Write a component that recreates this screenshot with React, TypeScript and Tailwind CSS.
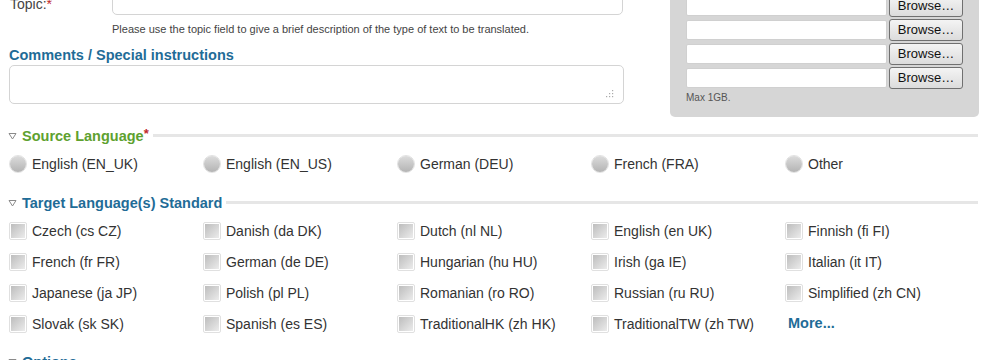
import React from "react"

const sourceLangs = ["English (EN_UK)", "English (EN_US)", "German (DEU)", "French (FRA)", "Other"]

const targetLangs = [
  "Czech (cs CZ)",
  "Danish (da DK)",
  "Dutch (nl NL)",
  "English (en UK)",
  "Finnish (fi FI)",
  "French (fr FR)",
  "German (de DE)",
  "Hungarian (hu HU)",
  "Irish (ga IE)",
  "Italian (it IT)",
  "Japanese (ja JP)",
  "Polish (pl PL)",
  "Romanian (ro RO)",
  "Russian (ru RU)",
  "Simplified (zh CN)",
  "Slovak (sk SK)",
  "Spanish (es ES)",
  "TraditionalHK (zh HK)",
  "TraditionalTW (zh TW)",
]

function Triangle() {
  return (
    <svg width="9" height="8" viewBox="0 0 9 8" className="mr-[5px] shrink-0">
      <path d="M1 1.5 L8 1.5 L4.5 7 Z" fill="none" stroke="#8a8a8a" strokeWidth="1" />
    </svg>
  )
}

function SectionHeading({ title, color, required }: { title: string; color: string; required?: boolean }) {
  return (
    <div className="flex items-center h-[18px] pl-[8px] pr-[9px]">
      <Triangle />
      <span className={`text-[14.5px] font-bold leading-[18px] ${color}`}>{title}</span>
      {required && <span className="text-[#c0282a] text-[13px] font-bold leading-[18px] -mt-[4px]">*</span>}
      <div className="flex-1 h-[3px] bg-[#e6e6e6] ml-[4px] -mt-[2px]" />
    </div>
  )
}

function Radio() {
  return (
    <span className="w-[18px] h-[18px] rounded-full border border-[#e2e2e2] bg-white flex items-center justify-center shrink-0">
      <span className="w-[16px] h-[16px] rounded-full bg-gradient-to-b from-[#dcdcdc] to-[#b4b4b4]" />
    </span>
  )
}

function Checkbox() {
  return (
    <span className="w-[18px] h-[18px] rounded-[2px] border border-[#e0e0e0] bg-white flex items-center justify-center shrink-0">
      <span className="w-[14px] h-[14px] bg-gradient-to-br from-[#bdbdbd] to-[#ececec]" />
    </span>
  )
}

function FileRow() {
  return (
    <div className="flex items-center h-[20px]">
      <div className="w-[201px] h-[20px] bg-white border border-[#d0d0d0] rounded-[2px]" />
      <button className="ml-[2px] w-[74px] h-[22px] rounded-[3px] border border-[#707070] bg-gradient-to-b from-[#f4f4f4] to-[#dcdcdc] text-[13px] text-[#111] leading-[20px]">
        Browse…
      </button>
    </div>
  )
}

export default function App() {
  return (
    <div className="w-[987px] h-[360px] overflow-hidden bg-white text-[#333] font-['Liberation_Sans',Arial,sans-serif]">
      <div className="-mt-[24px]">
        <div className="flex">
          <div className="w-[624px] pl-[9px]">
            <div className="flex">
              <div className="w-[103px] pt-[18px] pl-[1px] text-[14px] leading-[20px] text-[#444]">
                Topic:<span className="text-[#c0282a]">*</span>
              </div>
              <div className="w-[511px] h-[39px] border border-[#d4d4d4] rounded-[5px] bg-white" />
            </div>
            <p className="ml-[103px] mt-[7px] text-[11px] leading-[14px] text-[#444]">
              Please use the topic field to give a brief description of the type of text to be translated.
            </p>
            <h3 className="mt-[10px] text-[14.5px] font-bold leading-[18px] text-[#1f6c97]">
              Comments / Special instructions
            </h3>
            <div className="mt-[1px] h-[39px] border border-[#d4d4d4] rounded-[5px] bg-white flex items-end justify-end pr-[9px] pb-[5px]">
              <svg width="8" height="8" viewBox="0 0 8 8">
                <rect x="6" y="0" width="1.2" height="1.2" fill="#aaa" />
                <rect x="3" y="3" width="1.2" height="1.2" fill="#aaa" />
                <rect x="6" y="3" width="1.2" height="1.2" fill="#aaa" />
                <rect x="0" y="6" width="1.2" height="1.2" fill="#aaa" />
                <rect x="3" y="6" width="1.2" height="1.2" fill="#aaa" />
                <rect x="6" y="6" width="1.2" height="1.2" fill="#aaa" />
              </svg>
            </div>
          </div>
          <div className="ml-[46px] w-[309px] bg-[#d6d6d6] rounded-[5px] pl-[16px] pt-[20px] pb-[13px]">
            <div className="flex flex-col gap-[4px]">
              <FileRow />
              <FileRow />
              <FileRow />
              <FileRow />
            </div>
            <p className="mt-[4px] text-[10px] leading-[12px] text-[#555]">Max 1GB.</p>
          </div>
        </div>

        <div className="mt-[10px]">
          <SectionHeading title="Source Language" color="text-[#5ea12f]" required />
          <div className="grid grid-cols-[repeat(5,194px)] pl-[9px] mt-[10px]">
            {sourceLangs.map((l) => (
              <label key={l} className="flex items-center h-[18px]">
                <Radio />
                <span className="ml-[5px] text-[14px] leading-[18px]">{l}</span>
              </label>
            ))}
          </div>
        </div>

        <div className="mt-[21px]">
          <SectionHeading title="Target Language(s) Standard" color="text-[#1f6c97]" />
          <div className="grid grid-cols-[repeat(5,194px)] pl-[9px] mt-[10px] gap-y-[13px]">
            {targetLangs.map((l) => (
              <label key={l} className="flex items-center h-[18px]">
                <Checkbox />
                <span className="ml-[5px] text-[14px] leading-[18px]">{l}</span>
              </label>
            ))}
            <a className="flex items-center h-[18px] ml-[3px] text-[14.5px] font-bold text-[#1f6c97]">More...</a>
          </div>
        </div>

        <div className="mt-[20px]">
          <SectionHeading title="Options" color="text-[#1f6c97]" />
        </div>
      </div>
    </div>
  )
}
